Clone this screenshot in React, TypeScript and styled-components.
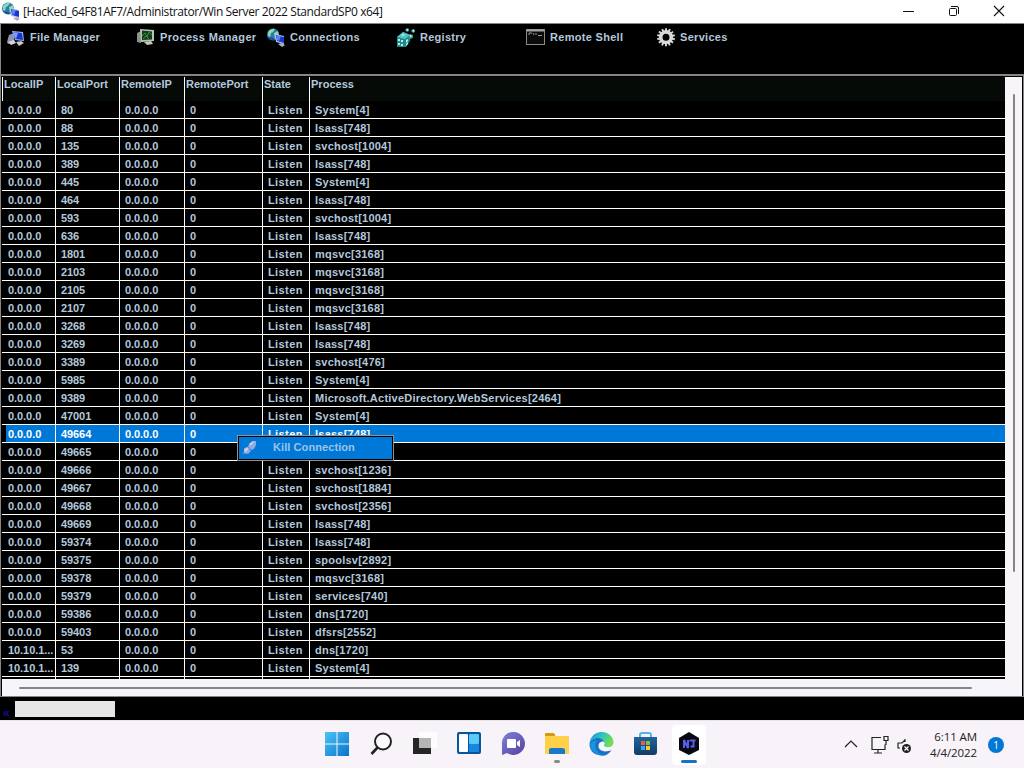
import React from 'react';
import styled, { createGlobalStyle } from 'styled-components';

const Global = createGlobalStyle`
  * { box-sizing: border-box; }
  body { margin: 0; background: #000; overflow: hidden; }
`;

const Screen = styled.div`
  width: 1024px;
  height: 768px;
  display: flex;
  flex-direction: column;
  font: bold 11px/17px "Liberation Sans", Arial, sans-serif;
  color: #b4c8dc;
  white-space: nowrap;
`;

const TitleBar = styled.header`
  height: 23px;
  flex: none;
  display: flex;
  align-items: center;
  background: #fff;
  color: #111;
  padding-left: 1px;
`;

const Title = styled.h1`
  margin: 0 auto 0 2px;
  font: 12px/23px "Open Sans", "Noto Sans", sans-serif;
  letter-spacing: -0.41px;
`;

const WindowButtons = styled.div`
  display: flex;
  width: 138px;
  height: 21px;
  align-items: center;
  padding-bottom: 2px;
`;

const WindowButton = styled.span`
  width: 45px;
  height: 12px;
  display: flex;
  justify-content: center;
`;

const Toolbar = styled.nav`
  height: 53px;
  flex: none;
  display: flex;
  align-items: flex-start;
  padding: 4px 0 0 6px;
  border-top: 1px solid #858585;
  border-left: 1px solid #858585;
  border-bottom: 2px solid #858585;
  background: #000;
`;

const Tool = styled.div<{ $spacing: number }>`
  width: 130px;
  flex: none;
  display: flex;
  align-items: flex-start;
  letter-spacing: ${p => p.$spacing}px;
  line-height: 18px;
  svg { flex: none; margin: 0 4px 0 -1px; }
`;

const Pane = styled.main`
  height: 621px;
  flex: none;
  display: flex;
  flex-direction: column;
  padding: 1px;
  border-left: 1px solid #858585;
  border-right: 1px solid #858585;
  border-bottom: 1px solid #858585;
  background: #000;
`;

const Upper = styled.div`
  height: 602px;
  flex: none;
  display: flex;
`;

const Table = styled.div`
  width: 1003px;
  height: 602px;
  overflow: hidden;
  display: flex;
  flex-direction: column;
`;

const HeaderRow = styled.div`
  display: flex;
  flex: none;
  height: 24px;
  background: #060a07;
  border-left: 1px solid #fff;
`;

const widths = [53, 64, 65, 78, 47, 695];

const HeaderCell = styled.div<{ $w: number; $last: boolean }>`
  width: ${p => p.$w}px;
  flex: none;
  padding-left: 1px;
  line-height: 15px;
  letter-spacing: 0.02px;
  border-right: ${p => (p.$last ? 'none' : '1px solid #fff')};
`;

const Row = styled.div<{ $selected: boolean; $h?: number }>`
  display: flex;
  flex: none;
  height: ${p => p.$h ?? 18}px;
  padding-left: 1px;
  border-bottom: ${p => (p.$h ? 'none' : '1px solid #fff')};
  color: ${p => (p.$selected ? '#fff' : '#b4c8dc')};
  background: ${p => (p.$selected ? 'linear-gradient(90deg, #000 4px, #0078d7 4px)' : '#000')};
`;

const Cell = styled.div<{ $w: number; $last: boolean; $i: number }>`
  width: ${p => p.$w}px;
  flex: none;
  padding-left: 5px;
  line-height: 18px;
  letter-spacing: ${p => [-0.06, -0.08, -0.06, 0, 0.4, 0.23][p.$i]}px;
  border-right: ${p => (p.$last ? 'none' : '1px solid #fff')};
`;

const VerticalScroll = styled.div`
  width: 17px;
  padding: 17px 0 0 8px;
  background: #f7f5fa;
  &::after { content: ''; display: block; width: 2px; height: 478px; background: #858585; border-radius: 1px; }
`;

const HorizontalScroll = styled.div`
  height: 17px;
  flex: none;
  padding: 8px 0 0 17px;
  background: #f7f5fa;
  &::after { content: ''; display: block; width: 953px; height: 2px; background: #858585; border-radius: 1px; }
`;

const StatusBar = styled.footer`
  height: 23px;
  flex: none;
  display: flex;
  padding: 4px 0 0 3px;
  background: #000;
`;

const Marker = styled.span`
  width: 12px;
  padding-top: 1px;
  color: #10109a;
  font-size: 12px;
  line-height: 22px;
`;

const Progress = styled.div`
  width: 100px;
  height: 16px;
  background: #e6e6e6;
`;

const ContextMenu = styled.div`
  position: absolute;
  left: 237px;
  top: 435px;
  width: 157px;
  height: 26px;
  display: flex;
  padding: 1px 0 0 4px;
  border: 1px solid #929292;
  outline: 1px solid #000;
  outline-offset: -2px;
  background: #0078d7;
  color: #9cc4e8;
  letter-spacing: 0.08px;
  line-height: 21px;
  svg { margin: 3px 15px 0 0; }
`;

const Taskbar = styled.div`
  height: 48px;
  flex: none;
  display: flex;
  background: #f7f3f9;
  border-top: 1px solid #e9e4ec;
  color: #222;
`;

const Apps = styled.div`
  display: flex;
  width: 396px;
  margin-left: 315px;
`;

const AppButton = styled.div<{ $active?: boolean; $running?: boolean }>`
  width: 34px;
  height: 40px;
  margin: 4px 5px;
  padding-top: 7px;
  display: flex;
  flex-direction: column;
  align-items: center;
  background: ${p => (p.$active ? '#fff' : 'transparent')};
  border-radius: 4px;
  &::after {
    content: '';
    flex: none;
    width: ${p => (p.$active ? 16 : p.$running ? 6 : 0)}px;
    height: 3px;
    margin-top: 4px;
    border-radius: 2px;
    background: ${p => (p.$active ? '#1473c5' : '#8a8a8c')};
  }
`;

const Tray = styled.div`
  margin-left: 132px;
  display: flex;
  align-items: center;
`;

const Clock = styled.div`
  width: 64px;
  margin-right: 11px;
  font: 11.5px/16px "Open Sans", "Noto Sans", sans-serif;
  letter-spacing: -0.1px;
  text-align: right;
`;

const Badge = styled.span`
  width: 16px;
  height: 16px;
  border-radius: 50%;
  background: #0078d4;
  color: #fff;
  font: 10px/16px "Open Sans", sans-serif;
  text-align: center;
`;

const Monitor = ({ x = 0, y = 0 }: { x?: number; y?: number }) => (
  <g transform={`translate(${x} ${y})`}>
    <path d="M1 0l9 2v8L2 8z" fill="#b9c4ea" />
    <path d="M2 1l8 2v6L3 7z" fill="#1738d0" />
    <path d="M3 1l4 1-2 5-2-1z" fill="#8ba6ff" opacity=".65" />
    <path d="M4 10l4-1 3 2-3 2z" fill="#b0b2ba" />
  </g>
);

const Globe = () => (
  <g>
    <circle cx="7" cy="6.5" r="6" fill="#287f9f" />
    <path d="M2 4q3-4 7-3l-2 3-2 1-1 4-2-1zM8 5l4-2 1 4-4 4z" fill="#8fd4bb" />
    <path d="M2 9q3 4 7 3l-2-2z" fill="#174a9b" />
  </g>
);

const NetIcon = () => (
  <svg width="20" height="20" viewBox="0 0 20 20">
    <Globe />
    <Monitor x={8} y={6} />
  </svg>
);

const FileIcon = () => (
  <svg width="20" height="20" viewBox="0 0 20 20">
    <path d="M3 7l5-2v9l-6 2-1-2z" fill="#8d94b4" />
    <path d="M2 14l6-2 2 3-5 2z" fill="#d9d4d8" />
    <path d="M6 3l11 1 1 9-9-1z" fill="#a9b8f0" />
    <path d="M7 4l9 1 1 7-8-1z" fill="#1738d0" />
    <path d="M7 4l5 1-2 6-1-1z" fill="#7ca0ff" />
    <path d="M10 14l5-1 3 2-5 3z" fill="#c8c8ce" />
  </svg>
);

const ProcessIcon = () => (
  <svg width="20" height="20" viewBox="0 0 20 20">
    <path d="M1 5l4-2v12l-4-1z" fill="#8c9189" />
    <path d="M4 1l14 1v11L5 14z" fill="#b9c2b3" />
    <path d="M6 2.500l10 1v8L6 12z" fill="#123e1c" />
    <path d="M6 8l3-3 2 4 2-5 3 3M7 11l3-3 3 3" fill="none" stroke="#358f42" />
    <path d="M8 14l7-1 2 3-6 1z" fill="#c8c7bd" />
  </svg>
);

const RegistryIcon = () => (
  <svg width="20" height="20" viewBox="0 0 20 20">
    <path d="M1 9l6-5 8 3-1 6-4 6H1z" fill="#23888b" />
    <path d="M1 9l6-5 7 3-5 4z" fill="#58c3c3" />
    <path d="M2 11h2v2H2zm3 1h2v2H5zm-3 3h2v2H2zm3 1h2v2H5zm5-4l2-1v2l-2 2zm0 4l2-2v2l-2 2zM7 6l2 1-2 1-2-1z" fill="#a6f5ed" />
    <path d="M14 6l3 1v3l-3 1-2-2zM11 0l2 1v2l-2 1-2-2zM17 1l2 1v2l-2 1-2-2z" fill="#399c9d" />
    <circle cx="11.2" cy="1.8" r=".9" fill="#d5fff9" />
    <circle cx="17.2" cy="2.700" r=".9" fill="#d5fff9" />
    <circle cx="14.6" cy="8" r=".9" fill="#d5fff9" />
  </svg>
);

const ShellIcon = () => (
  <svg width="20" height="20" viewBox="0 0 20 20">
    <rect x=".5" y="1.500" width="18" height="15" fill="#0b0b0b" stroke="#8b8b8b" />
    <path d="M1 2.500h17" stroke="#a5a5a5" strokeWidth="2" />
    <path d="M3 7V5h3M7 5l1 2M10 5v2M12 7.500h4" fill="none" stroke="#999" />
  </svg>
);

const GearIcon = () => (
  <svg width="20" height="20" viewBox="0 0 20 20">
    {Array.from({ length: 14 }, (_, i) => (
      <rect key={i} x="9.1" y=".2" width="1.9" height="4" fill="#d8d8d8" transform={`rotate(${i * 25.714} 10 9.2)`} />
    ))}
    <circle cx="10" cy="9.2" r="5.3" fill="none" stroke="#d8d8d8" strokeWidth="3.6" />
  </svg>
);

const PlugIcon = () => (
  <svg width="16" height="16" viewBox="0 0 16 16">
    <path d="M1 14l3-3" stroke="#5f86c4" strokeWidth="2" />
    <path d="M2 9l3-2 4 4-3 3-4-1z" fill="#8fa9dc" />
    <path d="M2 9l3-2 2 2-4 4z" fill="#c2cbea" />
    <path d="M7 4l4-3h3v4l-2 4-3 1-3-3z" fill="#8fa9dc" />
    <path d="M7 4l4-3 1 1-3 4z" fill="#c2cbea" />
  </svg>
);

const tools: [string, React.ReactNode, number][] = [
  ['File Manager', <FileIcon />, 0.23],
  ['Process Manager', <ProcessIcon />, 0.36],
  ['Connections', <NetIcon />, 0.29],
  ['Registry', <RegistryIcon />, 0.28],
  ['Remote Shell', <ShellIcon />, 0.3],
  ['Services', <GearIcon />, 0.3],
];

const headers = ['LocalIP', 'LocalPort', 'RemoteIP', 'RemotePort', 'State', 'Process'];

const connections: [string, string][] = [
  ['80', 'System[4]'], ['88', 'lsass[748]'], ['135', 'svchost[1004]'], ['389', 'lsass[748]'],
  ['445', 'System[4]'], ['464', 'lsass[748]'], ['593', 'svchost[1004]'], ['636', 'lsass[748]'],
  ['1801', 'mqsvc[3168]'], ['2103', 'mqsvc[3168]'], ['2105', 'mqsvc[3168]'], ['2107', 'mqsvc[3168]'],
  ['3268', 'lsass[748]'], ['3269', 'lsass[748]'], ['3389', 'svchost[476]'], ['5985', 'System[4]'],
  ['9389', 'Microsoft.ActiveDirectory.WebServices[2464]'], ['47001', 'System[4]'],
  ['49664', 'lsass[748]'], ['49665', ''], ['49666', 'svchost[1236]'], ['49667', 'svchost[1884]'],
  ['49668', 'svchost[2356]'], ['49669', 'lsass[748]'], ['59374', 'lsass[748]'], ['59375', 'spoolsv[2892]'],
  ['59378', 'mqsvc[3168]'], ['59379', 'services[740]'], ['59386', 'dns[1720]'], ['59403', 'dfsrs[2552]'],
  ['53', 'dns[1720]'], ['139', 'System[4]'],
];

const StartIcon = () => (
  <svg width="24" height="24" viewBox="0 0 24 24">
    <defs><linearGradient id="win" gradientUnits="userSpaceOnUse" x1="0" y1="0" x2="24" y2="24"><stop stopColor="#4cc4f5" /><stop offset="1" stopColor="#0873ce" /></linearGradient></defs>
    <path d="M0 0h11.500v11.500H0zm12.500 0H24v11.500H12.500zM0 12.500h11.500V24H0zm12.500 0H24V24H12.500z" fill="url(#win)" />
  </svg>
);

const SearchIcon = () => (
  <svg width="24" height="24" viewBox="0 0 24 24" fill="none" stroke="#222">
    <circle cx="14" cy="9.5" r="8" strokeWidth="2" fill="#fbf9fb" /><path d="M8.5 15.5L2.5 22" strokeWidth="2.6" />
  </svg>
);

const TaskViewIcon = () => (
  <svg width="24" height="24" viewBox="0 0 24 24">
    <path d="M6 0h18v16H6z" fill="#fff" opacity=".8" /><path d="M0 6h18v16H0z" fill="#252525" /><path d="M6 6h12v10H6z" fill="#b5b5b5" />
  </svg>
);

const WidgetsIcon = () => (
  <svg width="26" height="24" viewBox="0 0 26 24">
    <rect x="1" y="0" width="24" height="22" rx="2" fill="#07569d" />
    <rect x="3" y="2" width="9" height="18" rx="1" fill="#fff" /><rect x="13" y="2" width="10" height="10" rx="1" fill="#5bcaf8" /><rect x="13" y="12" width="10" height="8" rx="1" fill="#1688e0" />
  </svg>
);

const ChatIcon = () => (
  <svg width="24" height="24" viewBox="0 0 24 24">
    <defs><linearGradient id="chat" x1="0" y1="0" x2="1" y2="1"><stop stopColor="#7b83dc" /><stop offset="1" stopColor="#5b3e9e" /></linearGradient></defs>
    <path d="M12 0a11.5 11.5 0 1 1-6 21L1 23V12A11 11 0 0 1 12 0z" fill="url(#chat)" />
    <rect x="6" y="7" width="9" height="9" rx="1" fill="#fff" /><path d="M16 10l3-2v7l-3-2z" fill="#fff" />
  </svg>
);

const FolderIcon = () => (
  <svg width="26" height="24" viewBox="0 0 26 24">
    <path d="M1 2q0-1 1-1h8l2 4H1z" fill="#d39b0b" /><rect x="1" y="4" width="24" height="18" rx="1" fill="#ffd04a" />
    <path d="M5 22v-4q0-2 2-2h11q3 0 3 2v4z" fill="#1978c8" />
  </svg>
);

const EdgeIcon = () => (
  <svg width="25" height="24" viewBox="0 0 25 24">
    <defs><linearGradient id="edgeTop" x1="0" y1="0" x2="1" y2=".4"><stop stopColor="#168dd5" /><stop offset=".5" stopColor="#2ac4c4" /><stop offset="1" stopColor="#75dc55" /></linearGradient></defs>
    <path d="M.5 12C1 5 5.500 0 12.500 0S24.500 5 24.500 10c0 5-5 6-8 5-3-1-1-2-1-4 0-3-3-5-7-5-4 0-7 2-8 6z" fill="url(#edgeTop)" />
    <path d="M.5 12c1-4 4-6 8-6s7 2 7 5c-1-2-6-2-6 3 0 5 7 7 13 4-3 5-8 7-13 5C4 22 .5 18 .5 12z" fill="#1872c5" />
    <path d="M8 9c-4 4-1 12 5 14-7 0-12-5-12-11 2-3 5-4 7-3z" fill="#1995dc" />
    <path d="M15.500 11c0 2-2 3 1 4 2 1 4 1 6 0-2 3-5 4-8 3-4-1-5-6-2-8 1-1 3 0 3 1z" fill="#f5f8fb" />
  </svg>
);

const StoreIcon = () => (
  <svg width="24" height="24" viewBox="0 0 24 24">
    <defs><linearGradient id="store" x1="0" y1="0" x2="0" y2="1"><stop stopColor="#2165a1" /><stop offset="1" stopColor="#123b66" /></linearGradient></defs>
    <path d="M7 6V3q0-2 2-2h7q2 0 2 2v3" fill="none" stroke="#50b6ed" strokeWidth="2" />
    <path d="M1 5h23v15q0 3-3 3H4q-3 0-3-3z" fill="url(#store)" />
    <path d="M8 9h4v4H8z" fill="#f05b36" /><path d="M13 9h4v4h-4z" fill="#83bd3b" /><path d="M8 14h4v4H8z" fill="#29a9ed" /><path d="M13 14h4v4h-4z" fill="#fec436" />
  </svg>
);

const HexIcon = () => (
  <svg width="24" height="24" viewBox="0 0 24 24">
    <path d="M12 0l10 6v12l-10 5-10-5V6z" fill="#080911" />
    <g fill="none" stroke="#5a5df0" strokeWidth="2"><path d="M7 16V8l4 8V8M12.500 8.500h6M16.500 8v6.500h-3" /></g>
  </svg>
);

export default function App() {
  return (
    <Screen>
      <Global />
      <TitleBar>
        <NetIcon />
        <Title>[HacKed_64F81AF7/Administrator/Win Server 2022 StandardSP0 x64]</Title>
        <WindowButtons>
          <WindowButton><svg width="12" height="12"><path d="M0 6.500h11" stroke="#111" /></svg></WindowButton>
          <WindowButton><svg width="12" height="12" fill="none" stroke="#111"><rect x="1.500" y="3.500" width="7" height="7" rx="1" /><path d="M3 1.500h6q1.500 0 1.500 1.500v6" /></svg></WindowButton>
          <WindowButton><svg width="12" height="12"><path d="M1 1l10 10M11 1L1 11" stroke="#111" strokeWidth="1.1" /></svg></WindowButton>
        </WindowButtons>
      </TitleBar>
      <Toolbar>
        {tools.map(([name, icon, spacing]) => <Tool key={name} $spacing={spacing}>{icon}{name}</Tool>)}
      </Toolbar>
      <Pane>
        <Upper>
          <Table>
            <HeaderRow>
              {headers.map((h, i) => <HeaderCell key={h} $w={widths[i]} $last={i === 5}>{h}</HeaderCell>)}
            </HeaderRow>
            {connections.map(([port, proc], r) => (
              <Row key={port} $selected={r === 18}>
                {[r > 29 ? '10.10.1...' : '0.0.0.0', port, '0.0.0.0', '0', proc ? 'Listen' : '', proc].map((v, i) => (
                  <Cell key={i} $i={i} $w={widths[i]} $last={i === 5}>{v}</Cell>
                ))}
              </Row>
            ))}
            <Row $selected={false} $h={2}>
              {widths.map((w, i) => <Cell key={i} $i={i} $w={w} $last={i === 5} />)}
            </Row>
          </Table>
          <VerticalScroll />
        </Upper>
        <HorizontalScroll />
      </Pane>
      <StatusBar><Marker>«</Marker><Progress /></StatusBar>
      <Taskbar>
        <Apps>
          <AppButton><StartIcon /></AppButton>
          <AppButton><SearchIcon /></AppButton>
          <AppButton><TaskViewIcon /></AppButton>
          <AppButton><WidgetsIcon /></AppButton>
          <AppButton><ChatIcon /></AppButton>
          <AppButton $running><FolderIcon /></AppButton>
          <AppButton><EdgeIcon /></AppButton>
          <AppButton><StoreIcon /></AppButton>
          <AppButton $active><HexIcon /></AppButton>
        </Apps>
        <Tray>
          <svg width="70" height="24" fill="none" stroke="#222" strokeWidth="1.2">
            <path d="M2 14l6-6 6 6" />
            <path d="M38 4.500H29v12h13v-5M35 17v3M31 20h8M41 3.500h4v4h-4zM43 8v4" />
            <path d="M62 7l-3 3h-4v5h2M62 6v3" />
            <circle cx="63.500" cy="15.500" r="4.500" fill="#222" stroke="none" /><path d="M61.500 13.500l4 4m0-4l-4 4" stroke="#fff" />
          </svg>
          <Clock>6:11 AM<br />4/4/2022</Clock>
          <Badge>1</Badge>
        </Tray>
      </Taskbar>
      <ContextMenu><PlugIcon />Kill Connection</ContextMenu>
    </Screen>
  );
}
